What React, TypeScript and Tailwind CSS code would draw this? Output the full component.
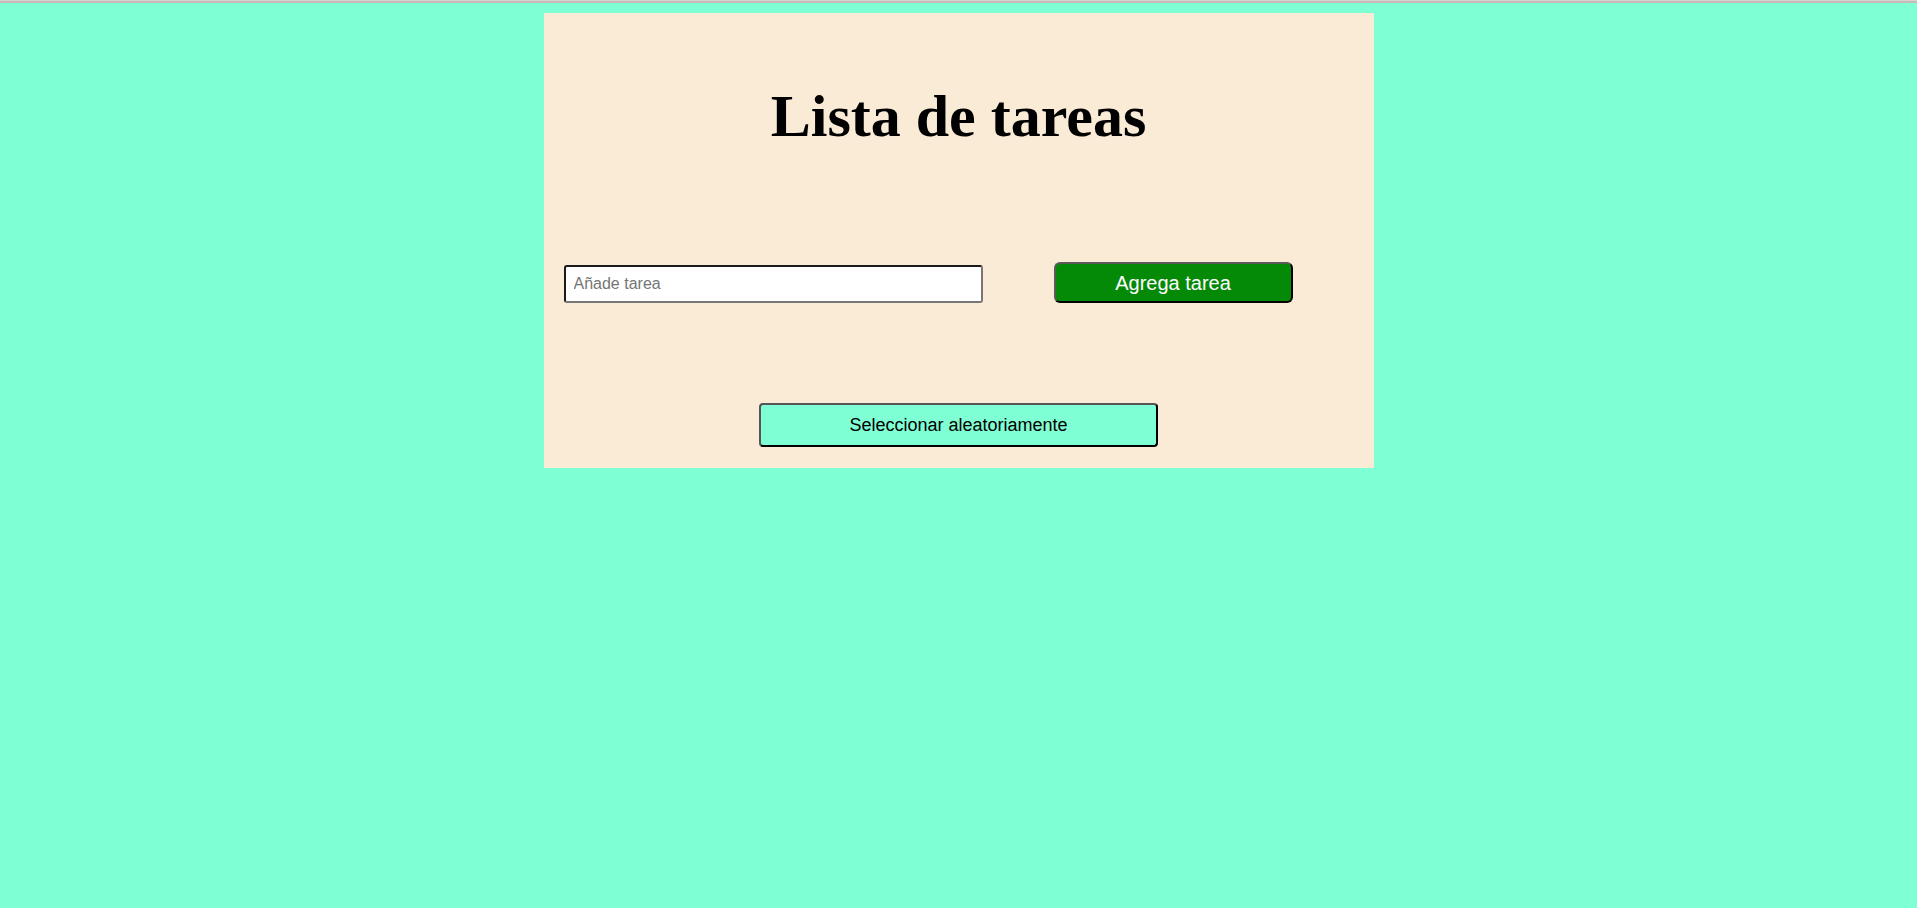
import React from "react";

export default function App() {
  return (
    <div className="min-h-[908px] w-full bg-[#7fffd4]" style={{ fontFamily: '"Liberation Sans", Arial, sans-serif' }}>
      <div className="h-[1px] w-full bg-[#d3d3d3]" />
      <div className="h-[2px] w-full bg-[#c9bab6]" />
      <div className="flex justify-center pt-[10px]">
        <div className="flex h-[455px] w-[830px] flex-col bg-[#faebd7] px-[20px] pt-[69px]">
          <h1
            className="text-center text-[60px] font-bold leading-[69px] text-black"
            style={{ fontFamily: '"Liberation Serif", "Times New Roman", serif' }}
          >
            Lista de tareas
          </h1>
          <div className="mt-[111px] flex items-end">
            <input
              type="text"
              placeholder="Añade tarea"
              className="h-[38px] w-[419px] rounded-[3px] border-2 border-t-[#1a1a1a] border-l-[#1a1a1a] border-r-[#767676] border-b-[#767676] bg-white px-[8px] text-[16px] text-black placeholder:text-[#757575] outline-none"
            />
            <button className="ml-[71px] h-[41px] w-[239px] rounded-[6px] border-2 border-t-[#5a5a5a] border-l-[#5a5a5a] border-r-black border-b-black bg-[#058a08] text-[20px] text-white">
              Agrega tarea
            </button>
          </div>
          <div className="mt-[100px] flex justify-center">
            <button className="h-[44px] w-[399px] rounded-[4px] border-2 border-t-[#555] border-l-[#555] border-r-black border-b-black bg-[#7fffd4] text-[18px] text-black">
              Seleccionar aleatoriamente
            </button>
          </div>
        </div>
      </div>
    </div>
  );
}
